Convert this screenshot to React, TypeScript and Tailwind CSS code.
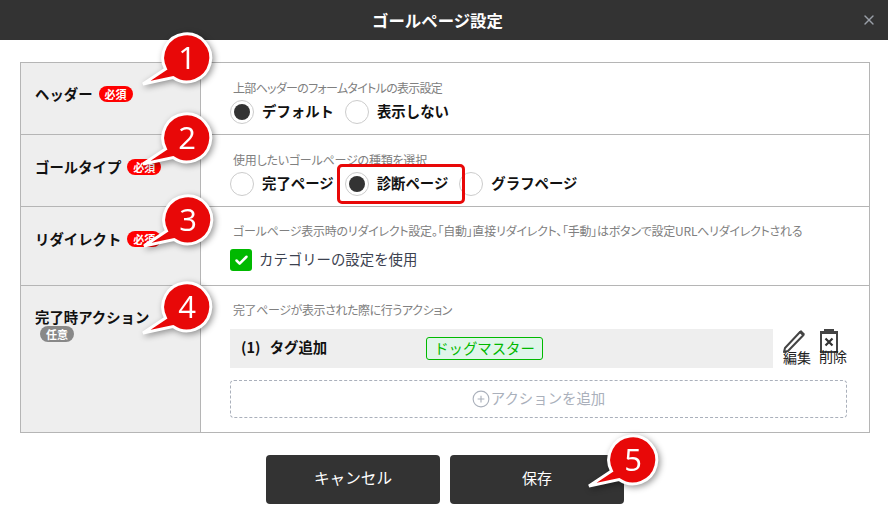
import React from "react";
import { X, Check } from "lucide-react";

const Callout = ({ n, className }: { n: number; className: string }) => (
  <svg
    viewBox="-50 -30 80 65"
    className={`absolute w-[80px] h-[65px] drop-shadow-[2px_2px_3px_rgba(0,0,0,0.4)] ${className}`}
  >
    <path d="M-44 26 L-21.5 11 A24 24 0 1 1 -14 19.5 Z" fill="#e80808" stroke="#fff" strokeWidth="3" />
    <text x="0" y="11" textAnchor="middle" fill="#fff" fontSize="31" fontFamily="'Open Sans', sans-serif">
      {n}
    </text>
  </svg>
);

const Badge = ({ text, gray }: { text: string; gray?: boolean }) => (
  <span
    className={`inline-flex items-center justify-center w-[34px] h-[16px] rounded-full text-white text-[11px] font-bold leading-none ${
      gray ? "bg-[#888888]" : "bg-[#ff0000]"
    }`}
  >
    {text}
  </span>
);

const Radio = ({ label, checked, gap }: { label: string; checked?: boolean; gap: string }) => (
  <label className={`flex items-center ${gap}`}>
    <span className="flex items-center justify-center w-[24px] h-[24px] rounded-full border border-[#cccccc] bg-white shrink-0">
      {checked && <span className="block w-[16px] h-[16px] rounded-full bg-[#333333]" />}
    </span>
    <span className="ml-[8px] pb-[3px] text-[14.4px] leading-[20px] font-bold text-[#111111]">{label}</span>
  </label>
);

const Desc = ({ children, tracking }: { children: React.ReactNode; tracking: string }) => (
  <p className={`ml-[3px] text-[12px] leading-[16px] text-[#808080] [font-feature-settings:'palt'] whitespace-nowrap ${tracking}`}>
    {children}
  </p>
);

const Row = ({
  label,
  inline,
  below,
  heightClass,
  labelPad,
  bodyPad,
  last,
  children,
}: {
  label: string;
  inline?: React.ReactNode;
  below?: React.ReactNode;
  heightClass: string;
  labelPad: string;
  bodyPad: string;
  last?: boolean;
  children: React.ReactNode;
}) => (
  <div className={`flex ${heightClass} ${last ? "" : "border-b border-[#b5b5b5]"}`}>
    <div className={`w-[180px] shrink-0 bg-[#eeeeee] border-r border-[#b5b5b5] pl-[14px] ${labelPad}`}>
      <div className="flex items-center gap-[6px] h-[20px] text-[14.4px] font-bold text-[#111111] whitespace-nowrap">
        {label}
        {inline}
      </div>
      {below && <div className="flex ml-[5px] -mt-[1px]">{below}</div>}
    </div>
    <div className={`flex-1 pl-[29px] pr-[22px] ${bodyPad}`}>{children}</div>
  </div>
);

export default function App() {
  return (
    <div
      className="relative w-[888px] h-[523px] overflow-hidden bg-white"
      style={{ fontFamily: "'Noto Sans CJK JP', 'Noto Sans', sans-serif" }}
    >
      <header className="flex items-center justify-center h-[40px] bg-[#333333] pr-[13px] relative">
        <h1 className="text-[16.4px] font-bold text-white">ゴールページ設定</h1>
        <X className="absolute right-[11px] top-[12px] w-[16px] h-[16px] text-[#9a9fa8]" strokeWidth={2} />
      </header>

      <div className="ml-[20px] mr-[18px] mt-[22px] border border-[#b5b5b5]">
        <Row label="ヘッダー" inline={<Badge text="必須" />} heightClass="h-[72px]" labelPad="pt-[21px]" bodyPad="pt-[17px]">
          <Desc tracking="tracking-[-0.7px]">上部ヘッダーのフォームタイトルの表示設定</Desc>
          <div className="flex mt-[4px]">
            <Radio label="デフォルト" checked gap="mr-[11px]" />
            <Radio label="表示しない" gap="" />
          </div>
        </Row>
        <Row label="ゴールタイプ" inline={<Badge text="必須" />} heightClass="h-[72px]" labelPad="pt-[22px]" bodyPad="pt-[17px]">
          <Desc tracking="tracking-[-0.2px]">使用したいゴールページの種類を選択</Desc>
          <div className="flex mt-[4px]">
            <Radio label="完了ページ" gap="mr-[11px]" />
            <Radio label="診断ページ" checked gap="mr-[11px]" />
            <Radio label="グラフページ" gap="" />
          </div>
        </Row>
        <Row label="リダイレクト" inline={<Badge text="必須" />} heightClass="h-[79px]" labelPad="pt-[22px]" bodyPad="pt-[16px]">
          <Desc tracking="tracking-[-0.25px]">ゴールページ表示時のリダイレクト設定。「自動」直接リダイレクト、「手動」はボタンで設定URLへリダイレクトされる</Desc>
          <div className="flex items-center mt-[10px] h-[22px]">
            <span className="flex items-center justify-center w-[22px] h-[22px] rounded-[3px] bg-[#00b900]">
              <Check className="w-[15px] h-[15px] text-white" strokeWidth={4} />
            </span>
            <span className="ml-[7px] pb-[3px] text-[14.4px] leading-[20px] text-[#3c4250]">カテゴリーの設定を使用</span>
          </div>
        </Row>
        <Row
          label="完了時アクション"
          below={<Badge text="任意" gray />}
          heightClass="h-[146px]"
          labelPad="pt-[21px]"
          bodyPad="pt-[16px]"
          last
        >
          <Desc tracking="tracking-[-0.4px]">完了ページが表示された際に行うアクション</Desc>
          <div className="flex mt-[11px] h-[39px]">
            <div className="flex items-center w-[543px] shrink-0 bg-[#eeeeee] pl-[11px]">
              <span className="w-[185px] pb-[3px] text-[14.4px] leading-[20px] font-bold text-[#111111] [word-spacing:6px]">(1) タグ追加</span>
              <span className="flex items-center justify-center w-[117px] h-[23px] pb-[2px] rounded-[3px] border border-[#00b900] bg-[#e0f5ea] text-[14.4px] text-[#00b900]">
                ドッグマスター
              </span>
            </div>
            <div className="flex flex-col items-center ml-[10px] w-[28px]">
              <svg viewBox="0 0 24 24" className="w-[24px] h-[24px] -ml-[6px] shrink-0">
                <path d="M3 19 L18 3 L21.5 6 L6 22 L2 23 Z" fill="#fff" stroke="#444" strokeWidth="2" strokeLinejoin="round" />
                <path d="M17 3 L19 1 L23 5 L21 7 Z" fill="#444" />
              </svg>
              <span className="text-[14px] leading-[16px] text-[#222222] -mt-[4px] whitespace-nowrap">編集</span>
            </div>
            <div className="flex flex-col items-center ml-[8px] w-[28px]">
              <svg viewBox="0 0 20 25" className="w-[20px] h-[25px] -ml-[8px] shrink-0 -mt-[1px]">
                <path d="M5 1 H15 V3 H19 V5 H1 V3 H5 Z" fill="#444" />
                <rect x="2" y="5" width="16" height="19" fill="#fff" stroke="#444" strokeWidth="2" />
                <path d="M6.5 10.5 L13.5 17.5 M13.5 10.5 L6.5 17.5" stroke="#333" strokeWidth="2.2" />
              </svg>
              <span className="text-[14px] leading-[16px] text-[#222222] -mt-[5px] whitespace-nowrap">削除</span>
            </div>
          </div>
          <button className="flex items-center justify-center w-[617px] h-[38px] mt-[12px] pb-[3px] rounded-[4px] border border-dashed border-[#aab0bb] text-[14.4px] text-[#aab0bb]">
            <svg viewBox="0 0 16 16" className="w-[18px] h-[18px] mr-[1px] mt-[3px]" fill="none" stroke="#aab0bb">
              <circle cx="8" cy="8" r="7" />
              <path d="M8 5 V11 M5 8 H11" />
            </svg>
            アクションを追加
          </button>
        </Row>
      </div>

      <div className="flex justify-center gap-[10px] mt-[22px] pl-[2px]">
        <button className="w-[174px] h-[49px] pb-[3px] rounded-[4px] bg-[#333333] text-white text-[15.6px]">キャンセル</button>
        <button className="w-[174px] h-[49px] pb-[3px] rounded-[4px] bg-[#333333] text-white text-[15px]">保存</button>
      </div>

      <div className="absolute left-[337px] top-[164px] w-[128px] h-[40px] rounded-[5px] border-[3px] border-[#e80808]" />
      <Callout n={1} className="left-[137px] top-[28px]" />
      <Callout n={2} className="left-[137px] top-[108px]" />
      <Callout n={3} className="left-[138px] top-[190px]" />
      <Callout n={4} className="left-[137px] top-[277px]" />
      <Callout n={5} className="left-[583px] top-[430px]" />
    </div>
  );
}
